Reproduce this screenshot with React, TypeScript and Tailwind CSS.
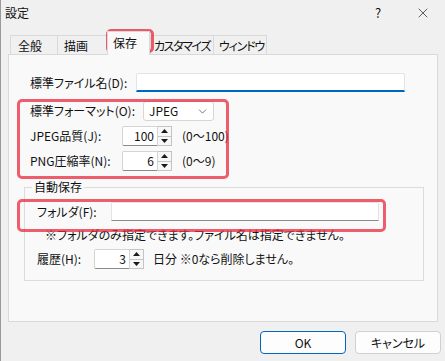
import React from "react";
import { ChevronDown, X } from "lucide-react";

function Spin({ value, w = 36 }: { value: string; w?: number }) {
  return (
    <div className="flex h-[20px]">
      <div
        className="h-full bg-white border border-[#d4d4d4] border-b-[#8a8a8a] rounded-l-[2px] flex items-center justify-end pr-[3px] text-[12px]"
        style={{ width: w }}
      >
        {value}
      </div>
      <div className="w-[14px] h-full flex flex-col border border-l-0 border-[#c4c4c4] bg-[#f7f7f7]">
        <div className="flex-1 flex items-center justify-center border-b border-[#c4c4c4]">
          <svg width="7" height="4" viewBox="0 0 7 4"><path d="M3.5 0 L7 4 L0 4 Z" fill="#1a1a1a" /></svg>
        </div>
        <div className="flex-1 flex items-center justify-center">
          <svg width="7" height="4" viewBox="0 0 7 4"><path d="M0 0 L7 0 L3.5 4 Z" fill="#1a1a1a" /></svg>
        </div>
      </div>
    </div>
  );
}

export default function App() {
  return (
    <div
      className="relative w-[445px] h-[361px] bg-[#f0f0f0] border-l border-[#9a9a9a] flex flex-col overflow-hidden whitespace-nowrap text-[#111] text-[12px] leading-[16px] [font-feature-settings:'palt']"
      style={{ fontFamily: '"Noto Sans CJK JP", "Noto Sans", sans-serif' }}
    >
      {/* title bar */}
      <div className="h-[25px] flex items-center">
        <span className="pl-[4px] text-[12px]">設定</span>
        <div className="ml-auto flex h-full">
          <div className="w-[46px] flex items-center justify-center text-[13px]">?</div>
          <div className="w-[44px] flex items-center justify-center">
            <X size={16} strokeWidth={1} color="#111" />
          </div>
        </div>
      </div>

      {/* tabs */}
      <div className="h-[29px] flex items-end pl-[9px]">
        <div className="w-[48px] h-[19px] bg-[#f0f0f0] border border-b-0 border-[#d9d9d9] -mr-px pt-[2px] pl-[7px]">全般</div>
        <div className="w-[51px] h-[19px] bg-[#f0f0f0] border border-b-0 border-[#d9d9d9] -mr-px pt-[2px] pl-[6px]">描画</div>
        <div className="relative z-10 w-[43px] h-[24px] -mb-px bg-[#f9f9f9] border border-b-0 border-[#d9d9d9] pt-[3px] pl-[5px]">保存</div>
        <div className="w-[64px] h-[19px] bg-[#f0f0f0] border border-b-0 border-[#d9d9d9] -mr-px pt-[2px] pl-[3px] tracking-[-1.4px] overflow-hidden">カスタマイズ</div>
        <div className="w-[54px] h-[19px] bg-[#f0f0f0] border border-b-0 border-[#d9d9d9] pt-[2px] pl-[5px] tracking-[-1.2px] overflow-hidden">ウィンドウ</div>
      </div>

      {/* panel */}
      <div className="ml-[7px] mr-[7px] h-[268px] bg-[#f9f9f9] border border-[#d9d9d9] flex flex-col">
        <div className="ml-[21px] mt-[18px] flex items-center h-[19px]">
          <span className="w-[106px]">標準ファイル名(D):</span>
          <div className="w-[269px] h-[19px] bg-white border border-[#e3e3e3] border-b-2 border-b-[#0067c0] rounded-t-[2px]" />
        </div>

        <div className="ml-[21px] mt-[9px] flex items-center h-[20px]">
          <span className="w-[113px]">標準フォーマット(O):</span>
          <div className="w-[71px] h-[20px] bg-white border border-[#d6d6d6] rounded-[3px] flex items-center pl-[5px] pr-[4px]">
            <span className="text-[12px]">JPEG</span>
            <ChevronDown size={13} strokeWidth={1.2} color="#333" className="ml-auto" />
          </div>
        </div>

        <div className="ml-[21px] mt-[5px] flex items-center h-[20px]">
          <span className="w-[92px]">JPEG品質(J):</span>
          <Spin value="100" />
          <span className="ml-[10px]">(0〜100)</span>
        </div>

        <div className="ml-[21px] mt-[5px] flex items-center h-[20px]">
          <span className="w-[92px]">PNG圧縮率(N):</span>
          <Spin value="6" />
          <span className="ml-[10px]">(0〜9)</span>
        </div>

        <fieldset className="ml-[15px] mt-[8px] w-[400px] border border-[#dcdcdc] pb-[12px]">
          <legend className="ml-[7px] px-[2px] leading-[16px]">自動保存</legend>
          <div className="ml-[12px] mt-[7px] flex items-center h-[19px]">
            <span className="w-[74px]">フォルダ(F):</span>
            <div className="w-[268px] h-[19px] bg-white border border-[#e3e3e3] border-b-[#8a8a8a] rounded-t-[2px]" />
          </div>
          <div className="ml-[20px] mt-[6px] leading-[16px]">
            ※フォルダのみ指定できます。ファイル名は指定できません。
          </div>
          <div className="ml-[12px] mt-[7px] flex items-center h-[18px]">
            <span className="w-[57px]">履歴(H):</span>
            <div className="h-[18px] flex items-center">
              <Spin value="3" w={36} />
            </div>
            <span className="ml-[9px]">日分 ※0なら削除しません。</span>
          </div>
        </fieldset>
      </div>

      {/* buttons */}
      <div className="mt-[9px] flex justify-end gap-[9px] pr-[4px]">
        <button className="w-[86px] h-[23px] bg-[#fdfdfd] border border-[#0067c0] rounded-[4px] text-[12px]">
          OK
        </button>
        <button className="w-[86px] h-[23px] bg-[#fdfdfd] border border-[#d0d0d0] rounded-[4px] text-[12px]">
          キャンセル
        </button>
      </div>

      {/* red annotation marks */}
      <div className="absolute left-[105px] top-[29px] w-[48px] h-[24px] border-[3px] border-[#e8283c]/75 rounded-[5px] pointer-events-none" />
      <div className="absolute left-[16px] top-[99px] w-[212px] h-[80px] border-[3px] border-[#e8283c]/75 rounded-[5px] pointer-events-none" />
      <div className="absolute left-[16px] top-[199px] w-[369px] h-[33px] border-[3px] border-[#e8283c]/75 rounded-[5px] pointer-events-none" />
    </div>
  );
}
